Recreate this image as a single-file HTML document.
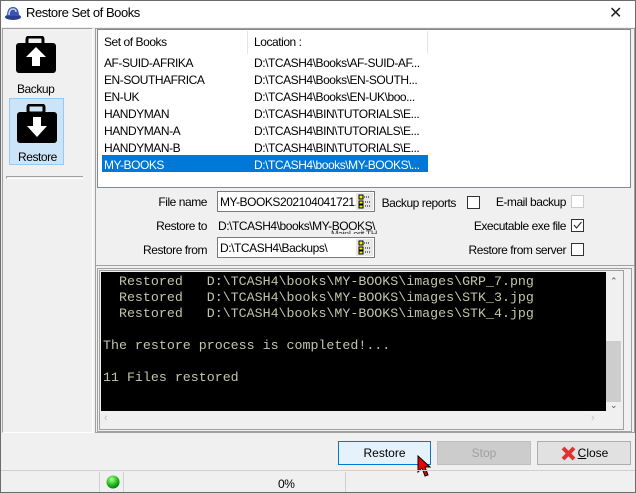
<!DOCTYPE html>
<html><head><meta charset="utf-8"><style>
*{box-sizing:border-box;margin:0;padding:0}
body{width:636px;height:493px;background:#f0f0f0;font-family:"Liberation Sans",sans-serif;font-size:12px;color:#000;position:relative;overflow:hidden}
.a{position:absolute}
.t{white-space:nowrap;letter-spacing:-0.45px}
.r{text-align:right}
.cb{position:absolute;width:13px;height:13px;border:1px solid #333;background:#fff}
.mono{font-family:"Liberation Mono",monospace;font-size:13.3px;color:#c4c4ac;white-space:pre;line-height:16px}
.btn{position:absolute;height:24px;border:1px solid #adadad;background:#e1e1e1;text-align:center;line-height:22px}
</style></head><body>
<div class="a" style="left:0;top:0;width:636px;height:493px;border:1px solid #6b6b6b"></div>
<div class="a" style="left:1px;top:1px;width:634px;height:26px;background:#fff"></div>
<svg class="a" style="left:4px;top:5px" width="18" height="16"><ellipse cx="9" cy="12" rx="8" ry="3" fill="#2c3e8f"/><path d="M3 11 Q3 2 9 2 Q15 2 15 11Z" fill="#3a55b0"/><path d="M5 10 Q5 4 9 4 Q12 4 12 7" fill="none" stroke="#c8d0f0" stroke-width="1.5"/></svg>
<div class="a t" style="left:26px;top:5px;font-size:13px">Restore Set of Books</div>
<div class="a" style="left:609px;top:3px;font-size:16px;color:#222">✕</div>
<div class="a" style="left:2px;top:28px;width:91px;height:405px;border:1px solid #a0a0a0;border-right-color:#fff;border-bottom-color:#fff"></div>
<svg class="a" style="left:15px;top:36px" width="42" height="38"><rect x="12" y="1" width="16" height="8" rx="2" fill="none" stroke="#000" stroke-width="3"/><rect x="1" y="7" width="40" height="30" rx="3" fill="#000"/><path d="M21 11 L31 21 L25 21 L25 30 L17 30 L17 21 L11 21Z" fill="#fff"/></svg>
<div class="a t" style="left:17px;top:82px">Backup</div>
<div class="a" style="left:9px;top:98px;width:55px;height:67px;background:#cce4f7;border:1px solid #99c9ef"></div>
<svg class="a" style="left:16px;top:104px" width="42" height="40"><rect x="12" y="1" width="16" height="8" rx="2" fill="none" stroke="#000" stroke-width="3"/><rect x="1" y="8" width="40" height="31" rx="3" fill="#000"/><path d="M17 13 L25 13 L25 22 L31 22 L21 33 L11 22 L17 22Z" fill="#fff"/></svg>
<div class="a t" style="left:18px;top:150px">Restore</div>
<div class="a" style="left:6px;top:176px;width:77px;height:3px;border-top:1px solid #a0a0a0;border-bottom:1px solid #fff;border-left:1px solid #a0a0a0"></div>
<div class="a" style="left:95px;top:28px;width:540px;height:405px;border:1px solid #a0a0a0"></div>
<div class="a" style="left:97px;top:29px;width:534px;height:159px;background:#fff;border:1px solid #828790"></div>
<div class="a" style="left:247px;top:31px;width:1px;height:23px;background:#e5e5e5"></div>
<div class="a" style="left:427px;top:31px;width:1px;height:23px;background:#e5e5e5"></div>
<div class="a t" style="left:104px;top:35px">Set of Books</div>
<div class="a t" style="left:254px;top:35px">Location :</div>
<div class="a" style="left:102px;top:155px;width:326px;height:17px;background:#0078d7"></div>
<div class="a t" style="left:104px;top:55px;line-height:17px">AF-SUID-AFRIKA<br>EN-SOUTHAFRICA<br>EN-UK<br>HANDYMAN<br>HANDYMAN-A<br>HANDYMAN-B<br><span style="color:#fff">MY-BOOKS</span></div>
<div class="a t" style="left:254px;top:55px;line-height:17px">D:\TCASH4\Books\AF-SUID-AF...<br>D:\TCASH4\Books\EN-SOUTH...<br>D:\TCASH4\Books\EN-UK\boo...<br>D:\TCASH4\BIN\TUTORIALS\E...<br>D:\TCASH4\BIN\TUTORIALS\E...<br>D:\TCASH4\BIN\TUTORIALS\E...<br><span style="color:#fff">D:\TCASH4\books\MY-BOOKS\...</span></div>
<div class="a t r" style="right:429px;top:195px">File name</div>
<div class="a" style="left:217px;top:191px;width:158px;height:21px;border:1px solid #7a7a7a;background:#fff;overflow:hidden"><span class="t" style="position:absolute;left:2px;top:3px">MY-BOOKS202104041721.e</span></div>
<div class="a t r" style="right:429px;top:219px">Restore to</div>
<div class="a t" style="left:218px;top:219px">D:\TCASH4\books\MY-BOOKS\</div>
<div class="a t" style="left:331px;top:229px;font-size:9px;height:5px;overflow:hidden;color:#333">MainLerit TH</div>
<div class="a t r" style="right:429px;top:243px">Restore from</div>
<div class="a" style="left:217px;top:237px;width:158px;height:21px;border:1px solid #7a7a7a;background:#fff"><span class="t" style="position:absolute;left:2px;top:3px">D:\TCASH4\Backups\</span></div>
<svg class="a" style="left:356px;top:193px" width="17" height="17"><rect x="0" y="0" width="17" height="17" fill="#e8e8e8"/><rect x="3" y="2" width="4" height="4" fill="#ee0" stroke="#000" stroke-width="1"/><rect x="3" y="8" width="4" height="3" fill="#ee0" stroke="#000" stroke-width="1"/><rect x="3" y="12" width="4" height="3" fill="#ee0" stroke="#000" stroke-width="1"/><path d="M8 4h6M9 9h6M9 13h6" stroke="#000" stroke-dasharray="1 1"/></svg>
<svg class="a" style="left:356px;top:239px" width="17" height="17"><rect x="0" y="0" width="17" height="17" fill="#e8e8e8"/><rect x="3" y="2" width="4" height="4" fill="#ee0" stroke="#000" stroke-width="1"/><rect x="3" y="8" width="4" height="3" fill="#ee0" stroke="#000" stroke-width="1"/><rect x="3" y="12" width="4" height="3" fill="#ee0" stroke="#000" stroke-width="1"/><path d="M8 4h6M9 9h6M9 13h6" stroke="#000" stroke-dasharray="1 1"/></svg>
<div class="a t r" style="right:180px;top:196px">Backup reports</div>
<div class="cb" style="left:467px;top:196px"></div>
<div class="a t r" style="right:70px;top:195px">E-mail backup</div>
<div class="cb" style="left:571px;top:195px;border-color:#ccc"></div>
<div class="a t r" style="right:70px;top:219px">Executable exe file</div>
<div class="cb" style="left:571px;top:219px"><svg width="11" height="11" style="position:absolute;left:0;top:0"><path d="M2 5 L4.5 8 L9.5 2" fill="none" stroke="#333" stroke-width="1.2"/></svg></div>
<div class="a t r" style="right:70px;top:243px">Restore from server</div>
<div class="cb" style="left:571px;top:243px"></div>
<div class="a" style="left:95px;top:265px;width:540px;height:1px;background:#a0a0a0"></div>
<div class="a" style="left:97px;top:268px;width:535px;height:164px;border:1px solid #a0a0a0;background:#f0f0f0"></div>
<div class="a" style="left:99px;top:270px;width:525px;height:160px;border:1px solid #a0a0a0"></div>
<div class="a" style="left:101px;top:272px;width:505px;height:139px;background:#000;overflow:hidden">
<div class="mono" style="position:absolute;left:2px;top:2px">  Restored   D:\TCASH4\books\MY-BOOKS\images\GRP_7.png
  Restored   D:\TCASH4\books\MY-BOOKS\images\STK_3.jpg
  Restored   D:\TCASH4\books\MY-BOOKS\images\STK_4.jpg

The restore process is completed!...

11 Files restored</div></div>
<div class="a" style="left:606px;top:272px;width:16px;height:139px;background:#f0f0f0"></div>
<div class="a" style="left:606px;top:341px;width:15px;height:61px;background:#cdcdcd"></div>
<div class="a" style="left:610px;top:276px;font-size:9px;color:#555">&#8963;</div>
<div class="a" style="left:610px;top:400px;font-size:9px;color:#555">&#8964;</div>
<div class="a" style="left:104px;top:412px;color:#c0c0c0;font-size:11px">&lsaquo;</div>
<div class="a" style="left:591px;top:412px;color:#c0c0c0;font-size:11px">&rsaquo;</div>
<div class="btn" style="left:338px;top:441px;width:93px;background:#e5f1fb;border-color:#0078d7">Restore</div>
<div class="btn" style="left:437px;top:441px;width:94px;background:#cccccc;border-color:#bfbfbf;color:#a0a0a0">Stop</div>
<div class="btn" style="left:537px;top:441px;width:94px"><svg style="position:absolute;left:23px;top:4px" width="15" height="15"><path d="M2 2 L13 13 M13 2 L2 13" stroke="#d33" stroke-width="4"/></svg><span style="position:relative;left:9px"><u>C</u>lose</span></div>
<svg class="a" style="left:417px;top:455px" width="16" height="24"><path d="M1 1 L1 17 L5 13 L8 21 L11 20 L8 12 L13 12Z" fill="#e00" stroke="#000" stroke-width="1"/></svg>
<div class="a" style="left:1px;top:470px;width:634px;height:1px;background:#d0d0d0"></div>
<div class="a" style="left:99px;top:472px;width:1px;height:20px;background:#d0d0d0"></div>
<div class="a" style="left:123px;top:472px;width:1px;height:20px;background:#d0d0d0"></div>
<div class="a" style="left:345px;top:472px;width:1px;height:20px;background:#d0d0d0"></div>
<svg class="a" style="left:106px;top:475px" width="14" height="14"><defs><radialGradient id="g" cx="0.4" cy="0.3" r="0.7"><stop offset="0" stop-color="#b0ff90"/><stop offset="0.6" stop-color="#22c020"/><stop offset="1" stop-color="#0a7a0a"/></radialGradient></defs><circle cx="7" cy="7" r="6.5" fill="url(#g)"/></svg>
<div class="a t" style="left:278px;top:477px">0%</div>
</body></html>
